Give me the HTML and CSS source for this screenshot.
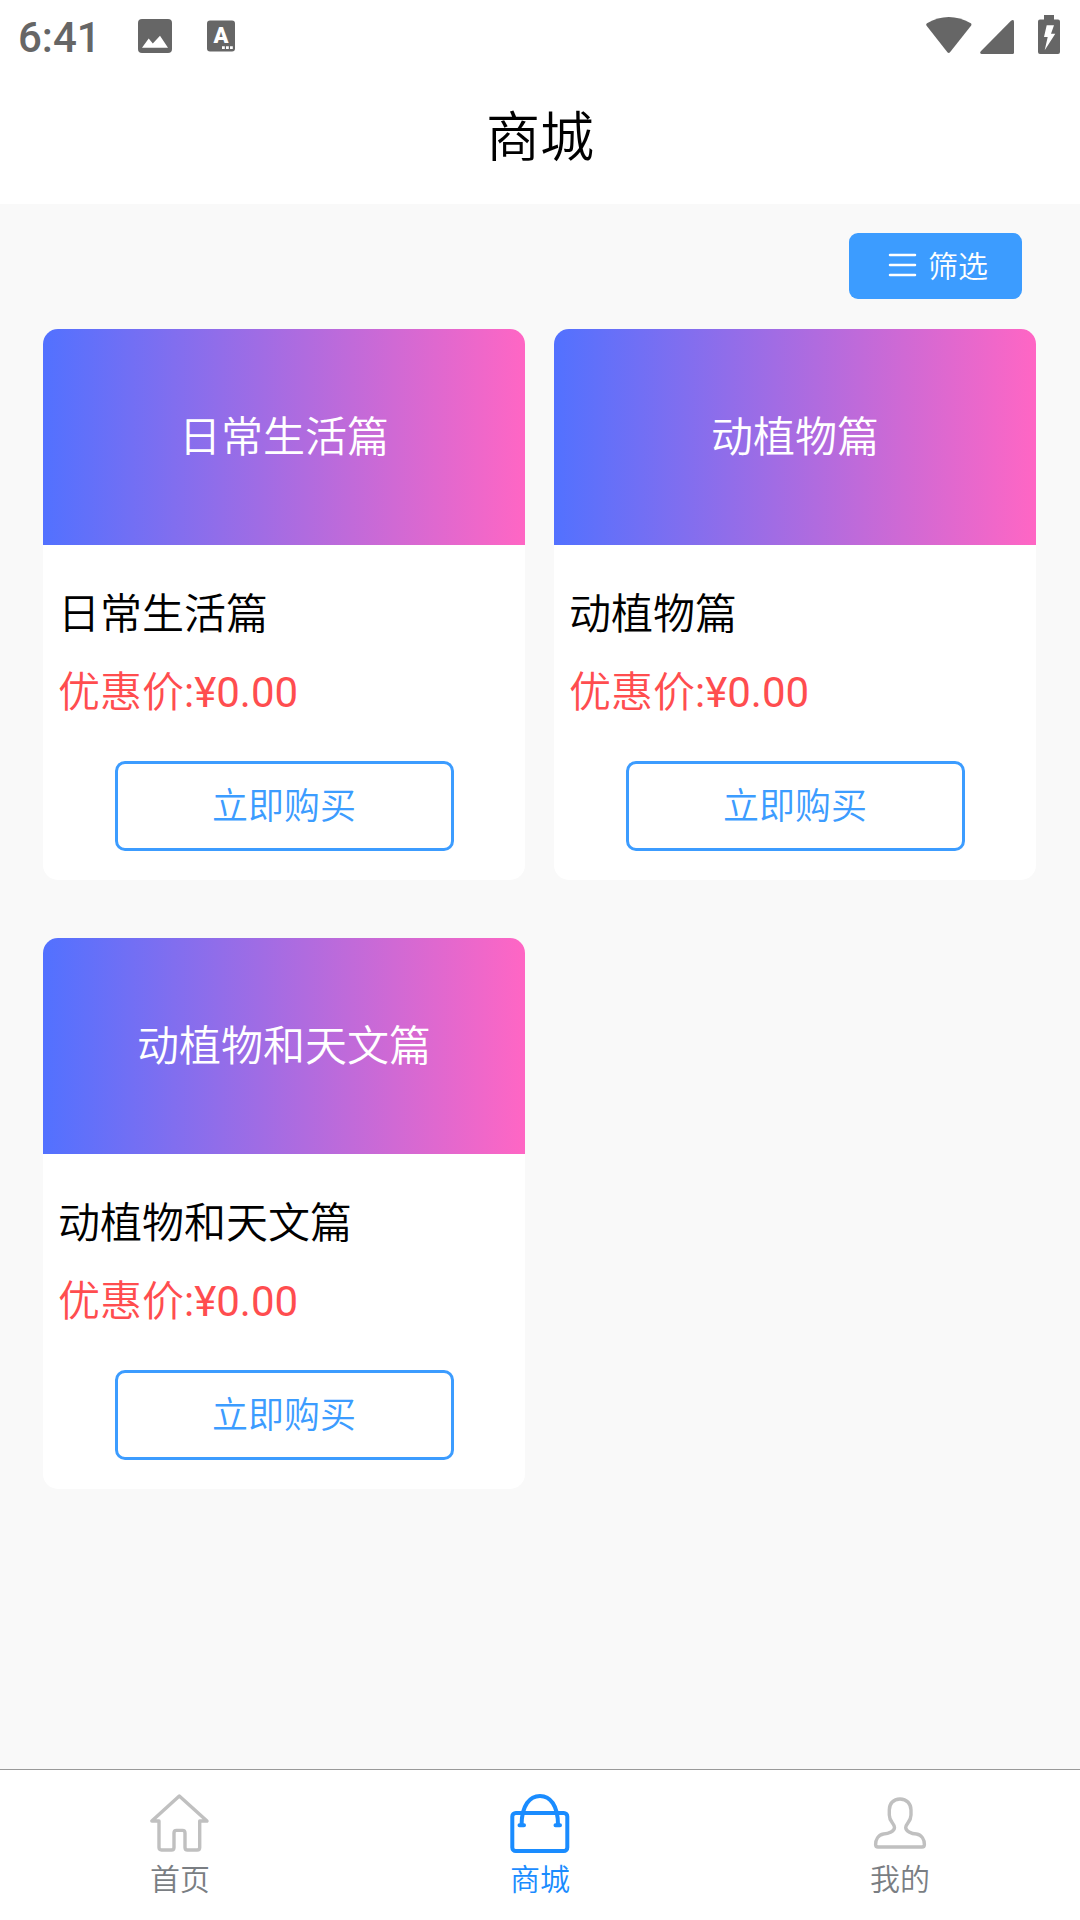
FILE: index.html
```html
<!DOCTYPE html>
<html lang="zh-CN">
<head>
<meta charset="utf-8">
<meta name="viewport" content="width=device-width, initial-scale=1">
<title>商城</title>
<link rel="stylesheet" href="styles.css">
</head>
<body>
<div class="page">
  <div class="status">
    <span class="status-time">6:41</span>
    <div class="status-notes">
      <svg width="34" height="44" viewBox="0 0 34 44" aria-hidden="true"><rect y="5" width="34" height="34" rx="4" fill="#666"/><path d="M4 33.7 10.7 24.5 14.8 29.4 22 21.7 30 33.7Z" fill="#fff"/></svg>
      <svg width="28" height="44" viewBox="0 0 28 44" aria-hidden="true"><rect y="6.5" width="28" height="31" rx="3" fill="#666"/><text class="status-letter" x="14" y="29" text-anchor="middle">A</text><path d="M15 32.3h2.8v2.8H15zM19 32.3h2.8v2.8H19zM23 32.3h2.8v2.8H23z" fill="#fff"/></svg>
    </div>
    <div class="status-system">
      <svg width="46" height="44" viewBox="0 0 46 44" aria-hidden="true"><path d="M1 9.2Q22.7-3.2 44.8 9.2 46 10.2 45 11.8L24 38.2Q22.7 39.6 21.4 38.2L.6 11.8Q-.4 10.2 1 9.2Z" fill="#666"/></svg>
      <svg width="34" height="44" viewBox="0 0 34 44" aria-hidden="true"><path d="M.6 37.5 31 6.8Q33.6 5 34 7.500V38.500Q34 40 32.500 40H1.500Q-.6 39.500.6 37.500Z" fill="#666"/></svg>
      <svg class="status-battery" width="22" height="44" viewBox="0 0 22 44" aria-hidden="true"><path d="M6 1h10v4.500h4Q22 5.500 22 7.500V38Q22 40 20 40H2Q0 40 0 38V7.500Q0 5.500 2 5.500H6Z" fill="#666"/><path d="M8.700 11.300H16L13 19.700H17.300L6.700 36.300 9.700 23H6Z" fill="#fff"/></svg>
    </div>
  </div>
  <header class="header"><h1 class="header-title">商城</h1></header>
  <main class="main">
    <div class="toolbar">
      <button class="filter" type="button">
        <svg width="34" height="34" viewBox="0 0 34 34" aria-hidden="true"><path d="M5 8H30M5 18H30M5 28H30" stroke="#fff" stroke-width="2.500" stroke-linecap="round"/></svg>
        筛选
      </button>
    </div>
    <div class="goods">
      <article class="card">
        <div class="cover">日常生活篇</div>
        <div class="info">
          <h2 class="name">日常生活篇</h2>
          <p class="price">优惠价<span class="amount">:¥0.00</span></p>
          <button class="buy" type="button">立即购买</button>
        </div>
      </article>
      <article class="card">
        <div class="cover">动植物篇</div>
        <div class="info">
          <h2 class="name">动植物篇</h2>
          <p class="price">优惠价<span class="amount">:¥0.00</span></p>
          <button class="buy" type="button">立即购买</button>
        </div>
      </article>
      <article class="card">
        <div class="cover">动植物和天文篇</div>
        <div class="info">
          <h2 class="name">动植物和天文篇</h2>
          <p class="price">优惠价<span class="amount">:¥0.00</span></p>
          <button class="buy" type="button">立即购买</button>
        </div>
      </article>
    </div>
  </main>
  <nav class="tabs">
    <a class="tab" href="#home">
      <svg width="60" height="60" viewBox="0 0 60 60" fill="none" stroke="#c0c0c0" stroke-width="3.400" stroke-linejoin="round" aria-hidden="true"><path d="M29.300 3 57 28H49.700V54.500Q49.700 57 47.200 57H37.500Q35 57 35 54.500V40Q35 37.400 32.500 37.400H26.500Q24 37.400 24 40V54.500Q24 57 21.500 57H11.500Q9 57 9 54.500V28H1.800Z"/></svg>
      首页
    </a>
    <a class="tab tab-active" href="#mall" aria-current="page">
      <svg width="60" height="60" viewBox="0 0 60 60" fill="none" stroke="#1a8cff" stroke-width="4" stroke-linecap="round" aria-hidden="true"><rect x="2.300" y="20" width="55" height="38" rx="3.500"/><path d="M11.600 32C11.600 12 20 3 30 3S48 12 48 32M9.500 32.300H14M45.500 32.300H50"/></svg>
      商城
    </a>
    <a class="tab" href="#mine">
      <svg width="60" height="60" viewBox="0 0 60 60" fill="none" stroke="#c0c0c0" stroke-width="3.400" stroke-linejoin="round" aria-hidden="true"><path d="M30 6C23 6 19.300 11 19.300 17V22C19.300 29 24.500 30.500 24.500 34.500 24.500 38 19 41 13.500 41 8 42 5.600 47 5.600 51.500Q5.600 54 8 54H52Q54.400 54 54.400 51.500C54.400 47 52 42 46.500 41 41 41 35.700 38 35.700 34.500 35.700 30.500 41 29 41 22V17C41 11 37 6 30 6Z"/></svg>
      我的
    </a>
  </nav>
</div>
</body>
</html>
```
FILE: styles.css
```css
* {
  box-sizing: border-box;
}

body {
  margin: 0;
  background: #f9f9f9;
  color: #000;
  font-family: Roboto, "Noto Sans CJK SC", sans-serif;
  font-weight: 350;
}

h1, h2, p {
  margin: 0;
  font-weight: inherit;
}

svg {
  display: block;
  flex: none;
}

button {
  font-family: inherit;
  font-weight: inherit;
  cursor: pointer;
}

.page {
  display: flex;
  flex-direction: column;
  min-height: 100vh;
}

/* Status bar */
.status {
  display: flex;
  align-items: center;
  height: 72px;
  padding: 0 20px 0 18px;
  background: #fff;
}

.status-time {
  padding-top: 4px;
  color: #666;
  font-size: 42px;
  font-weight: 500;
  line-height: 48px;
}

.status-notes {
  display: flex;
  gap: 35px;
  margin-left: 37px;
}

.status-letter {
  fill: #fff;
  font-size: 22px;
  font-weight: 900;
}

.status-system {
  display: flex;
  gap: 8px;
  margin-left: auto;
}

.status-battery {
  margin-left: 16px;
}

/* Page header */
.header {
  display: flex;
  align-items: center;
  justify-content: center;
  height: 132px;
  padding-top: 2px;
  background: #fff;
}

.header-title {
  font-size: 54px;
  line-height: 72px;
}

/* Goods list */
.main {
  flex: 1;
  padding: 29px 44px 58px 43px;
}

.toolbar {
  display: flex;
  justify-content: flex-end;
  padding-right: 14px;
  margin-bottom: 30px;
}

.filter {
  display: flex;
  align-items: center;
  justify-content: center;
  gap: 9px;
  width: 173px;
  height: 66px;
  padding: 0 0 4px 2px;
  border: 0;
  border-radius: 9px;
  background: #3c9cff;
  color: #fff;
  font-size: 30px;
}

.goods {
  display: grid;
  grid-template-columns: 1fr 1fr;
  gap: 58px 29px;
}

.card {
  overflow: hidden;
  border-radius: 15px;
  background: #fff;
}

.cover {
  display: flex;
  align-items: center;
  justify-content: center;
  height: 216px;
  padding-bottom: 8px;
  background: linear-gradient(90deg, #5271ff, #ff66c4);
  color: #fff;
  font-size: 42px;
}

.info {
  display: flex;
  flex-direction: column;
  padding: 40px 15px 29px;
}

.name,
.price {
  font-size: 42px;
  line-height: 60px;
}

.price {
  margin: 18px 0 38px;
  color: #ff4d4f;
}

.amount {
  font-weight: 400;
}

.buy {
  align-self: center;
  width: 75%;
  height: 90px;
  padding: 0 0 7px;
  border: 3px solid #3c9cff;
  border-radius: 10px;
  background: #fff;
  color: #3c9cff;
  font-size: 36px;
}

/* Bottom tabs */
.tabs {
  display: grid;
  grid-template-columns: repeat(3, 1fr);
  padding: 23px 0 22px;
  border-top: 1px solid #999;
  background: #fff;
}

.tab {
  display: flex;
  flex-direction: column;
  align-items: center;
  gap: 9px;
  color: #7a7e83;
  font-size: 30px;
  line-height: 36px;
  text-decoration: none;
}

.tab-active {
  color: #1a8cff;
}
```
